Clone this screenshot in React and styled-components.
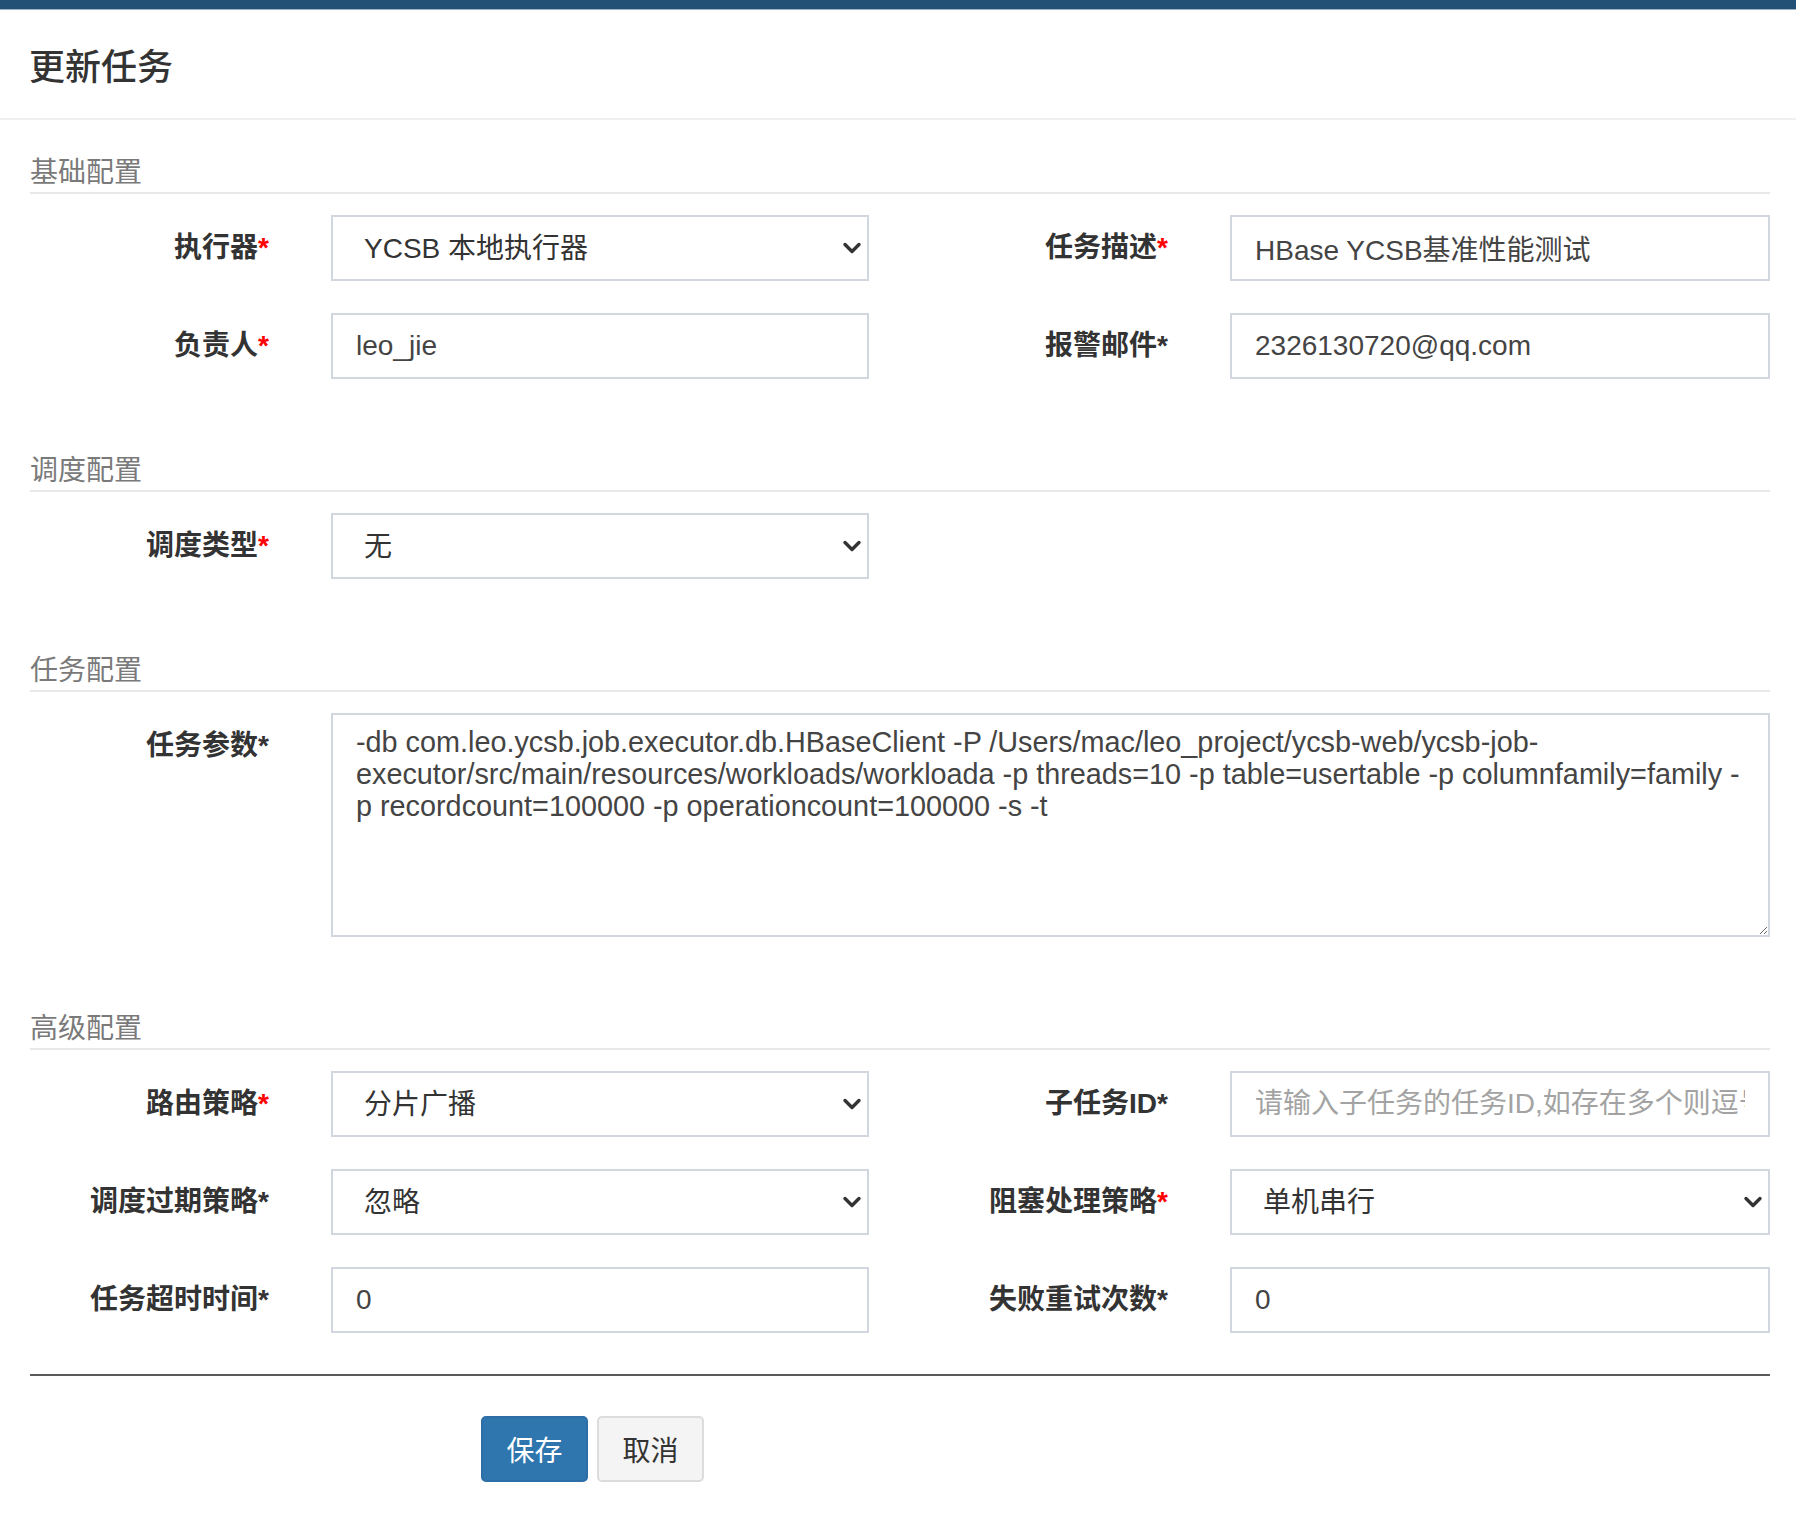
import React from "react";
import styled, { createGlobalStyle } from "styled-components";

const fontStack = `"Liberation Sans", "Noto Sans CJK SC", sans-serif`;

const GlobalStyle = createGlobalStyle`
  html, body {
    margin: 0;
    padding: 0;
    background: #fff;
  }
  body {
    font-family: ${fontStack};
    color: #333;
  }
  * {
    box-sizing: border-box;
  }
`;

const Page = styled.div`
  width: 1796px;
  min-height: 1540px;
  background: #fff;
`;

const TopBar = styled.div`
  height: 10px;
  background: #235075;
  border-bottom: 1px solid #9fb0c0;
`;

const Header = styled.div`
  height: 110px;
  display: flex;
  align-items: center;
  padding-left: 29px;
  border-bottom: 2px solid #f0f0f0;
`;

const Title = styled.h4`
  margin: 0;
  font-size: 36px;
  font-weight: 500;
  color: #333;
`;

const Body = styled.div`
  padding: 34px 26px 0 30px;
`;

const Section = styled.div`
  & + & {
    margin-top: 73px;
  }
`;

const SectionTitle = styled.p`
  margin: 0 0 21px;
  font-size: 28px;
  line-height: 38px;
  color: #7a7a7a;
  border-bottom: 2px solid #e8e8e8;
`;

const FormGrid = styled.div`
  display: grid;
  grid-template-columns: 239px 538px 237px 540px;
  column-gap: 62px;
  row-gap: 32px;
`;

const Label = styled.label`
  text-align: right;
  font-size: 28px;
  font-weight: bold;
  line-height: 66px;
  color: #333;
  white-space: nowrap;
`;

const Star = styled.span`
  color: ${(p) => (p.$red ? "#f00" : "#333")};
`;

const Field = styled.div`
  position: relative;
  grid-column: span ${(p) => p.$span || 1};
`;

const controlBase = `
  display: block;
  width: 100%;
  margin: 0;
  border: 2px solid #d2d6de;
  border-radius: 0;
  background: #fff;
  font-family: ${fontStack};
  font-size: 28px;
  outline: none;
`;

const TextInput = styled.input`
  ${controlBase}
  height: 66px;
  padding: 0 23px;
  color: #444;

  &::placeholder {
    color: #a3a3a3;
  }
`;

const Select = styled.select`
  ${controlBase}
  height: 66px;
  padding: 0 40px 0 31px;
  color: #333;
  appearance: none;
  -webkit-appearance: none;
`;

const Chevron = styled.svg`
  position: absolute;
  right: 7px;
  top: 50%;
  transform: translateY(-50%);
  pointer-events: none;
`;

const TextArea = styled.textarea`
  ${controlBase}
  height: 224px;
  padding: 11px 23px;
  font-size: 28.8px;
  line-height: 32px;
  color: #444;
  resize: vertical;
`;

const Divider = styled.div`
  margin-top: 41px;
  height: 2px;
  background: #595959;
`;

const Actions = styled.div`
  display: flex;
  gap: 9px;
  margin-top: 40px;
  padding-left: 451px;
`;

const Button = styled.button`
  width: 107px;
  height: 66px;
  border-radius: 5px;
  font-family: ${fontStack};
  font-size: 28px;
  cursor: pointer;
  border: 2px solid ${(p) => (p.$primary ? "#2c6ea5" : "#dcdcdc")};
  background: ${(p) => (p.$primary ? "#2f75ae" : "#f4f4f4")};
  color: ${(p) => (p.$primary ? "#fff" : "#333")};
`;

const params =
  "-db com.leo.ycsb.job.executor.db.HBaseClient -P /Users/mac/leo_project/ycsb-web/ycsb-job-\n" +
  "executor/src/main/resources/workloads/workloada -p threads=10 -p table=usertable -p columnfamily=family -\n" +
  "p recordcount=100000 -p operationcount=100000 -s -t";

const sections = [
  {
    title: "基础配置",
    fields: [
      { label: "执行器", red: true, type: "select", value: "YCSB 本地执行器" },
      { label: "任务描述", red: true, type: "input", value: "HBase YCSB基准性能测试" },
      { label: "负责人", red: true, type: "input", value: "leo_jie" },
      { label: "报警邮件", type: "input", value: "2326130720@qq.com" },
    ],
  },
  {
    title: "调度配置",
    fields: [{ label: "调度类型", red: true, type: "select", value: "无" }],
  },
  {
    title: "任务配置",
    fields: [{ label: "任务参数", type: "textarea", value: params, span: 3 }],
  },
  {
    title: "高级配置",
    fields: [
      { label: "路由策略", red: true, type: "select", value: "分片广播" },
      {
        label: "子任务ID",
        type: "input",
        value: "",
        placeholder: "请输入子任务的任务ID,如存在多个则逗号分隔",
      },
      { label: "调度过期策略", type: "select", value: "忽略" },
      { label: "阻塞处理策略", red: true, type: "select", value: "单机串行" },
      { label: "任务超时时间", type: "input", value: "0" },
      { label: "失败重试次数", type: "input", value: "0" },
    ],
  },
];

const ChevronIcon = () => (
  <Chevron width="20" height="13" viewBox="0 0 20 13">
    <path
      d="M3 3 L10 10 L17 3"
      fill="none"
      stroke="#333"
      strokeWidth="3.4"
      strokeLinecap="round"
      strokeLinejoin="round"
    />
  </Chevron>
);

const Control = ({ field }) => {
  if (field.type === "select") {
    return (
      <Field $span={field.span}>
        <Select defaultValue={field.value}>
          <option value={field.value}>{field.value}</option>
        </Select>
        <ChevronIcon />
      </Field>
    );
  }
  if (field.type === "textarea") {
    return (
      <Field $span={field.span}>
        <TextArea defaultValue={field.value} />
      </Field>
    );
  }
  return (
    <Field $span={field.span}>
      <TextInput
        type="text"
        defaultValue={field.value}
        placeholder={field.placeholder}
      />
    </Field>
  );
};

export default function App() {
  return (
    <Page>
      <GlobalStyle />
      <TopBar />
      <Header>
        <Title>更新任务</Title>
      </Header>
      <Body>
        {sections.map((section) => (
          <Section key={section.title}>
            <SectionTitle>{section.title}</SectionTitle>
            <FormGrid>
              {section.fields.map((field) => (
                <React.Fragment key={field.label}>
                  <Label>
                    {field.label}
                    <Star $red={field.red}>*</Star>
                  </Label>
                  <Control field={field} />
                </React.Fragment>
              ))}
            </FormGrid>
          </Section>
        ))}
        <Divider />
        <Actions>
          <Button $primary>保存</Button>
          <Button>取消</Button>
        </Actions>
      </Body>
    </Page>
  );
}
